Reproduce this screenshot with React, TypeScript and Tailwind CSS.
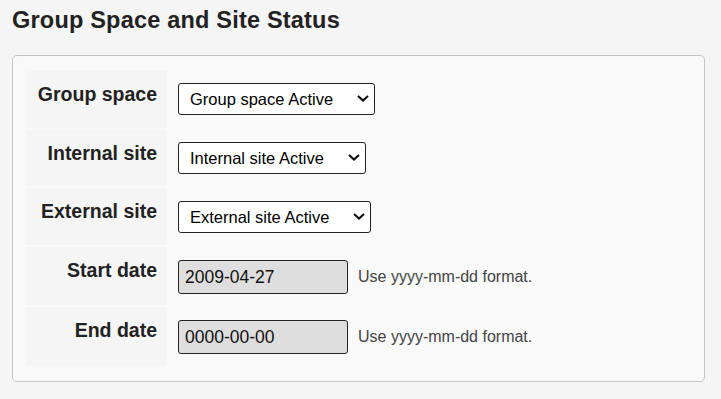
const font = { fontFamily: '"Liberation Sans", Arial, sans-serif' };

const SelectBox = ({ value, width }: { value: string; width: string }) => (
    <div className={`relative h-[32px] ${width}`}>
        <select
            defaultValue={value}
            className="appearance-none w-full h-full bg-white border border-[#222] rounded-[3px] pl-[11px] pr-8 text-[16.5px] text-black outline-none"
        >
            <option>{value}</option>
        </select>
        <svg
            viewBox="0 0 12 7"
            className="absolute right-[6px] top-[12px] w-[12px] h-[7px] pointer-events-none"
        >
            <path d="M1 1l5 4.5L11 1" fill="none" stroke="#111" strokeWidth="2.2" />
        </svg>
    </div>
);

const DateBox = ({ value }: { value: string }) => (
    <div className="flex items-center">
        <input
            readOnly
            value={value}
            className="w-[170px] h-[34px] bg-[#dedede] border border-[#222] rounded-[3px] pl-[6px] text-[17.5px] text-[#111] outline-none"
        />
        <span className="ml-[10px] text-[16px] text-[#444]">Use yyyy-mm-dd format.</span>
    </div>
);

const rows = [
    { label: "Group space", h: "h-[57px]", pt: "pt-[12px]", field: <SelectBox value="Group space Active" width="w-[197px]" /> },
    { label: "Internal site", h: "h-[56px]", pt: "pt-[12px]", field: <SelectBox value="Internal site Active" width="w-[188px]" /> },
    { label: "External site", h: "h-[57px]", pt: "pt-[13px]", field: <SelectBox value="External site Active" width="w-[193px]" /> },
    { label: "Start date", h: "h-[58px]", pt: "pt-[13px]", field: <DateBox value="2009-04-27" /> },
    { label: "End date", h: "h-[59px]", pt: "pt-[13px]", field: <DateBox value="0000-00-00" /> },
];

export default function App() {
    return (
        <div className="min-h-[399px] bg-[#f5f5f5] px-[12px] pt-[6px]" style={font}>
            <h2 className="text-[23.5px] leading-[28px] font-bold text-[#222] tracking-[0.2px]">
                Group Space and Site Status
            </h2>
            <div className="mt-[21px] w-[693px] bg-[#f9f9f9] border border-[#c4c4c4] rounded-[5px] px-[14px] py-[15px]">
                <div className="grid grid-cols-[140px_1fr] gap-x-[2px] gap-y-[2px]">
                    {rows.map((r) => (
                        <div key={r.label} className="contents">
                            <div className={`${r.h} bg-[#f5f5f5] pr-[10px] pt-[12px] text-right text-[19.5px] leading-[23px] font-bold text-[#222]`}>
                                {r.label}
                            </div>
                            <div className={`${r.pt} pl-[9px]`}>{r.field}</div>
                        </div>
                    ))}
                </div>
            </div>
        </div>
    );
}
